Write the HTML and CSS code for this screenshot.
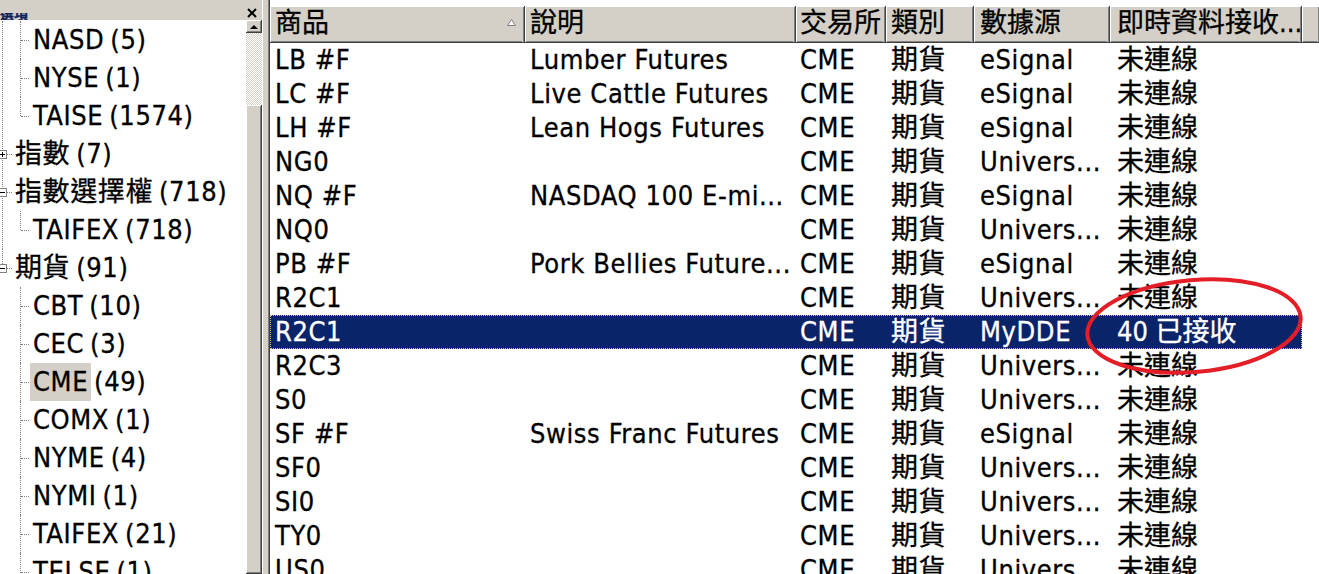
FILE: index.html
```html
<!DOCTYPE html>
<html>
<head>
<meta charset="UTF-8">
<link rel="stylesheet" href="styles.css">
</head>
<body>
<div class="app">

  <div class="side">
    <div class="caption">
      <span class="cap-title">選項</span>
      <svg class="cap-close" width="10" height="10" viewBox="0 0 10 10">
        <path d="M1 1 L9 9 M9 1 L1 9" stroke="#000" stroke-width="2"/>
      </svg>
    </div>
    <div class="side-body">
      <div class="tree">
        <div class="upper">
          <div class="node child"><span class="lbl">NASD</span>(5)</div>
          <div class="node child"><span class="lbl">NYSE</span>(1)</div>
          <div class="node child end"><span class="lbl">TAISE</span>(1574)</div>
          <div class="node top"><span class="box plus"></span><span class="lbl">指數</span>(7)</div>
          <div class="node top"><span class="box"></span><span class="lbl">指數選擇權</span>(718)</div>
          <div class="node child end"><span class="lbl">TAIFEX</span>(718)</div>
        </div>
        <div class="node top last"><span class="box"></span><span class="lbl">期貨</span>(91)</div>
        <div class="node child"><span class="lbl">CBT</span>(10)</div>
        <div class="node child"><span class="lbl">CEC</span>(3)</div>
        <div class="node child"><span class="lbl hl">CME</span>(49)</div>
        <div class="node child"><span class="lbl">COMX</span>(1)</div>
        <div class="node child"><span class="lbl">NYME</span>(4)</div>
        <div class="node child"><span class="lbl">NYMI</span>(1)</div>
        <div class="node child"><span class="lbl">TAIFEX</span>(21)</div>
        <div class="node child"><span class="lbl">TELSE</span>(1)</div>
      </div>
      <div class="scroll">
        <div class="sb-btn"><span class="arrow-up"></span></div>
        <div class="sb-track"></div>
        <div class="sb-thumb"></div>
      </div>
    </div>
  </div>

  <div class="splitter"></div>

  <div class="list">
    <div class="head">
      <div class="hc sorted">商品
        <svg class="sort" width="9" height="7" viewBox="0 0 9 7"><path d="M4.5 0.5 L8.5 6.5 L0.5 6.5 Z" fill="#fff" stroke="#808080"/></svg>
      </div>
      <div class="hc">說明</div>
      <div class="hc">交易所</div>
      <div class="hc">類別</div>
      <div class="hc">數據源</div>
      <div class="hc">即時資料接收...</div>
      <div class="hc filler"></div>
    </div>

    <div class="row"><div>LB #F</div><div>Lumber Futures</div><div>CME</div><div>期貨</div><div>eSignal</div><div>未連線</div></div>
    <div class="row"><div>LC #F</div><div>Live Cattle Futures</div><div>CME</div><div>期貨</div><div>eSignal</div><div>未連線</div></div>
    <div class="row"><div>LH #F</div><div>Lean Hogs Futures</div><div>CME</div><div>期貨</div><div>eSignal</div><div>未連線</div></div>
    <div class="row"><div>NG0</div><div></div><div>CME</div><div>期貨</div><div>Univers...</div><div>未連線</div></div>
    <div class="row"><div>NQ #F</div><div>NASDAQ 100 E-mi...</div><div>CME</div><div>期貨</div><div>eSignal</div><div>未連線</div></div>
    <div class="row"><div>NQ0</div><div></div><div>CME</div><div>期貨</div><div>Univers...</div><div>未連線</div></div>
    <div class="row"><div>PB #F</div><div>Pork Bellies Future...</div><div>CME</div><div>期貨</div><div>eSignal</div><div>未連線</div></div>
    <div class="row"><div>R2C1</div><div></div><div>CME</div><div>期貨</div><div>Univers...</div><div>未連線</div></div>
    <div class="row sel"><div>R2C1</div><div></div><div>CME</div><div>期貨</div><div>MyDDE</div><div>40 已接收</div></div>
    <div class="row"><div>R2C3</div><div></div><div>CME</div><div>期貨</div><div>Univers...</div><div>未連線</div></div>
    <div class="row"><div>S0</div><div></div><div>CME</div><div>期貨</div><div>Univers...</div><div>未連線</div></div>
    <div class="row"><div>SF #F</div><div>Swiss Franc Futures</div><div>CME</div><div>期貨</div><div>eSignal</div><div>未連線</div></div>
    <div class="row"><div>SF0</div><div></div><div>CME</div><div>期貨</div><div>Univers...</div><div>未連線</div></div>
    <div class="row"><div>SI0</div><div></div><div>CME</div><div>期貨</div><div>Univers...</div><div>未連線</div></div>
    <div class="row"><div>TY0</div><div></div><div>CME</div><div>期貨</div><div>Univers...</div><div>未連線</div></div>
    <div class="row"><div>US0</div><div></div><div>CME</div><div>期貨</div><div>Univers...</div><div>未連線</div></div>
  </div>

  <!-- red annotation ring around the received-data cell -->
  <svg class="mark" width="1319" height="574" viewBox="0 0 1319 574">
    <ellipse cx="1194" cy="326" rx="107" ry="46" transform="rotate(-5 1194 326)" fill="none" stroke="#e41e26" stroke-width="4"/>
  </svg>

</div>
</body>
</html>
```

FILE: styles.css
```css
body
{
    margin: 0;
    overflow: hidden;
    background: #fff;
    color: #000;
    font-family: "DejaVu Sans Condensed", "DejaVu Sans", "Noto Sans CJK TC", sans-serif;
    font-stretch: condensed;
    font-size: 27px;
    letter-spacing: 0.6px;
    -webkit-text-stroke: 0.3px;
}

.app
{
    position: relative;
    display: flex;
    width: 1319px;
    height: 574px;
    overflow: hidden;
}

/* left panel */

.side
{
    width: 262px;
    flex-shrink: 0;
    display: flex;
    flex-direction: column;
}

.caption
{
    height: 20px;
    flex-shrink: 0;
    background: #d4d0c8;
    display: flex;
    justify-content: space-between;
    overflow: hidden;
}

.cap-title
{
    display: block;
    margin-top: 13px;
    height: 7px;
    overflow: hidden;
    font-size: 14px;
    line-height: 3px;
    letter-spacing: 0;
    font-weight: bold;
    color: #10205a;
}

.cap-close
{
    margin: 8px 5px 0 0;
}

.side-body
{
    flex: 1;
    display: flex;
    min-height: 0;
}

.tree
{
    width: 246px;
    overflow: hidden;
    background: #fff;
    padding-top: 1px;
}

.upper
{
    position: relative;
}

.upper::before
{
    content: "";
    position: absolute;
    left: 2px;
    top: 0;
    bottom: 0;
    border-left: 1px dotted #808080;
}

.node
{
    position: relative;
    height: 38px;
    line-height: 38px;
    white-space: nowrap;
}

.lbl
{
    display: inline-block;
    padding: 0 3px;
    margin-right: 3px;
}

.lbl.hl
{
    background: #d4d0c8;
}

.child
{
    padding-left: 30px;
}

.child::before
{
    content: "";
    position: absolute;
    left: 20px;
    top: 0;
    bottom: 0;
    border-left: 1px dotted #808080;
}

.child.end::before
{
    bottom: 19px;
}

.child::after
{
    content: "";
    position: absolute;
    left: 21px;
    top: 19px;
    width: 8px;
    border-top: 1px dotted #808080;
}

.top
{
    padding-left: 12px;
}

.top::after
{
    content: "";
    position: absolute;
    left: 7px;
    top: 19px;
    width: 5px;
    border-top: 1px dotted #808080;
}

.top.last::before
{
    content: "";
    position: absolute;
    left: 2px;
    top: 0;
    height: 19px;
    border-left: 1px dotted #808080;
}

.box
{
    position: absolute;
    left: -2px;
    top: 15px;
    width: 9px;
    height: 9px;
    box-sizing: border-box;
    border: 1px solid #808080;
    background: #fff;
    z-index: 1;
}

.box::before
{
    content: "";
    position: absolute;
    left: 1px;
    top: 3px;
    width: 5px;
    height: 1px;
    background: #000;
}

.box.plus::after
{
    content: "";
    position: absolute;
    left: 3px;
    top: 1px;
    width: 1px;
    height: 5px;
    background: #000;
}

/* scrollbar */

.scroll
{
    width: 16px;
    display: flex;
    flex-direction: column;
}

.sb-btn,
.sb-thumb
{
    background: #d4d0c8;
    box-shadow: inset -1px -1px #404040, inset 1px 1px #fff, inset -2px -2px #808080;
}

.sb-btn
{
    height: 13px;
    display: flex;
    align-items: center;
    justify-content: center;
}

.arrow-up
{
    width: 0;
    height: 0;
    border-left: 4px solid transparent;
    border-right: 4px solid transparent;
    border-bottom: 4px solid #000;
}

.sb-track
{
    height: 72px;
    background: repeating-conic-gradient(#fff 0 25%, #d4d0c8 0 50%) 0 0 / 2px 2px;
}

.sb-thumb
{
    flex: 1;
}

.splitter
{
    width: 5px;
    flex-shrink: 0;
    background: #d4d0c8;
    border-left: 1px solid #fff;
}

/* list view */

.list
{
    flex: 1;
    padding-top: 6px;
    border-left: 1px solid #808080;
    box-shadow: inset 1px 0 #404040;
    background: #fff;
    white-space: nowrap;
}

.head
{
    display: grid;
    grid-template-columns: 255px 271px 90px 88px 136px 192px 1fr;
    height: 37px;
    box-sizing: border-box;
    background: #d4d0c8;
    border-bottom: 1px solid #404040;
    box-shadow: 0 -1px #808080 inset;
    margin-left: 1px;
}

.hc
{
    position: relative;
    padding-left: 5px;
    line-height: 34px;
    letter-spacing: 0;
    box-shadow: inset 1px 1px #fff, inset -1px 0 #808080, inset -2px 0 #d4d0c8;
    border-right: 1px solid #404040;
    overflow: hidden;
}

.hc.filler
{
    border-right: none;
}

.sort
{
    position: absolute;
    right: 8px;
    top: 13px;
}

.row
{
    display: grid;
    grid-template-columns: 255px 271px 90px 88px 136px 192px;
    width: 1032px;
    height: 34px;
    line-height: 34px;
    margin-left: 1px;
}

.row > div
{
    padding-left: 5px;
    overflow: hidden;
}

.head > :nth-child(3),
.row > :nth-child(3)
{
    padding-left: 4px;
}

.head > :nth-child(5),
.row > :nth-child(5)
{
    padding-left: 6px;
}

.head > :nth-child(6),
.row > :nth-child(6)
{
    padding-left: 7px;
    letter-spacing: 0;
}

.row.sel
{
    background: #0a246a;
    color: #fff;
    outline: 1px dotted #d8c070;
    outline-offset: -1px;
}

.mark
{
    position: absolute;
    left: 0;
    top: 0;
    pointer-events: none;
}
```
